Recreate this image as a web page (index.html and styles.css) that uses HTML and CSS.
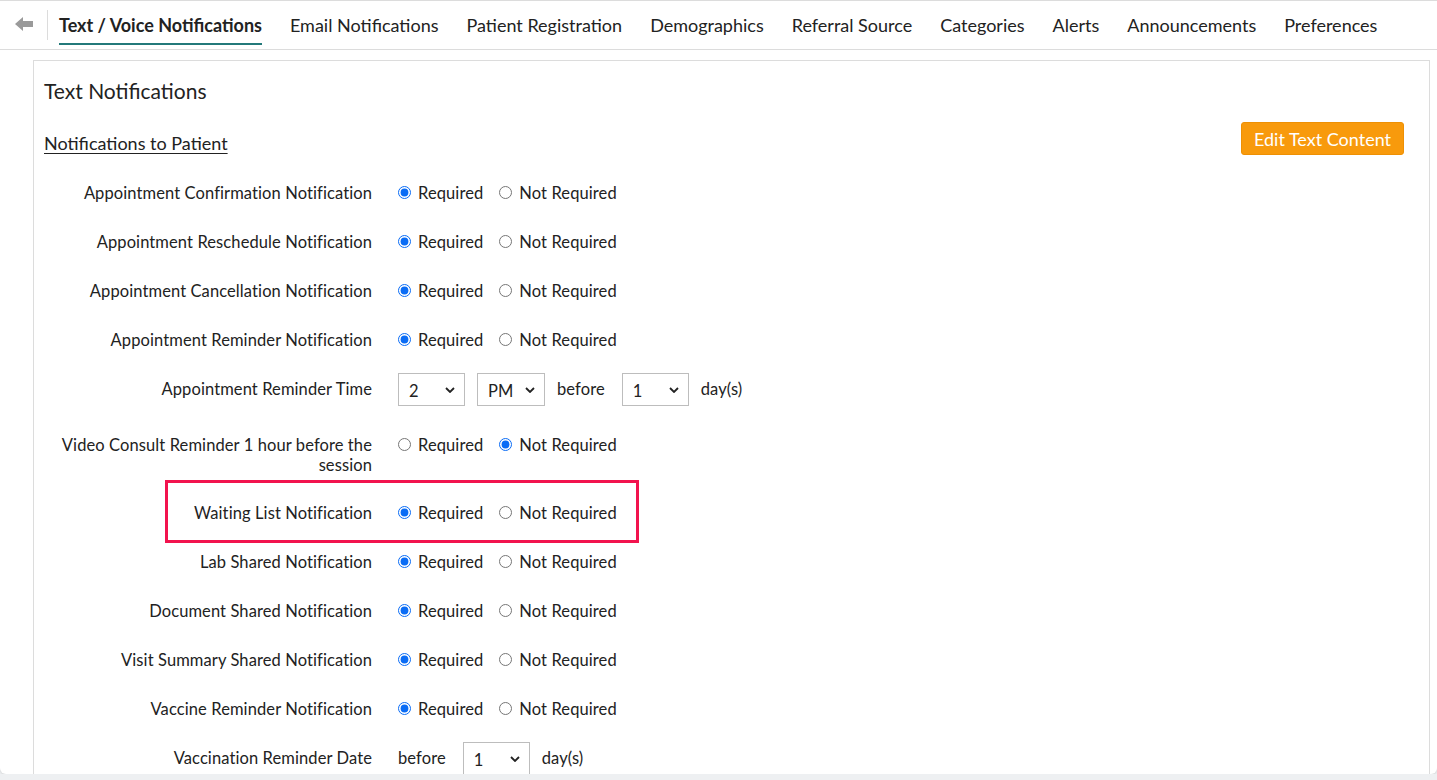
FILE: index.html
```html
<!DOCTYPE html>
<html lang="en">

<head>
    <meta charset="UTF-8">
    <meta name="viewport" content="width=device-width, initial-scale=1.0">
    <title>Text / Voice Notifications</title>
    <link rel="stylesheet" href="styles.css">
</head>

<body>
    <div class="page">
        <!-- top tabs -->
        <div class="topbar">
            <div class="back">
                <svg width="18" height="14" viewBox="0 0 18 14">
                    <polygon points="0,7 8,0 8,4 18,4 18,10 8,10 8,14" fill="#9a9a9a" />
                </svg>
            </div>
            <div class="sep"></div>
            <div class="tabs">
                <div class="tab active">Text / Voice Notifications</div>
                <div class="tab">Email Notifications</div>
                <div class="tab">Patient Registration</div>
                <div class="tab">Demographics</div>
                <div class="tab">Referral Source</div>
                <div class="tab">Categories</div>
                <div class="tab">Alerts</div>
                <div class="tab">Announcements</div>
                <div class="tab">Preferences</div>
            </div>
        </div>

        <!-- settings panel -->
        <div class="panel">
            <div class="panel-title">Text Notifications</div>
            <div class="panel-head">
                <div class="sub-title">Notifications to Patient</div>
                <button class="btn-orange">Edit Text Content</button>
            </div>

            <div class="row">
                <div class="label">Appointment Confirmation Notification</div>
                <div class="controls">
                    <label class="opt"><input type="radio" name="r1" checked> Required</label>
                    <label class="opt"><input type="radio" name="r1"> Not Required</label>
                </div>
            </div>
            <div class="row">
                <div class="label">Appointment Reschedule Notification</div>
                <div class="controls">
                    <label class="opt"><input type="radio" name="r2" checked> Required</label>
                    <label class="opt"><input type="radio" name="r2"> Not Required</label>
                </div>
            </div>
            <div class="row">
                <div class="label">Appointment Cancellation Notification</div>
                <div class="controls">
                    <label class="opt"><input type="radio" name="r3" checked> Required</label>
                    <label class="opt"><input type="radio" name="r3"> Not Required</label>
                </div>
            </div>
            <div class="row">
                <div class="label">Appointment Reminder Notification</div>
                <div class="controls">
                    <label class="opt"><input type="radio" name="r4" checked> Required</label>
                    <label class="opt"><input type="radio" name="r4"> Not Required</label>
                </div>
            </div>
            <div class="row row-select">
                <div class="label">Appointment Reminder Time</div>
                <div class="controls">
                    <select class="sel sel-num"><option>2</option></select>
                    <select class="sel sel-ampm"><option>PM</option></select>
                    <span class="before">before</span>
                    <select class="sel sel-num"><option>1</option></select>
                    <span>day(s)</span>
                </div>
            </div>
            <div class="row row-wrap">
                <div class="label">Video Consult Reminder 1 hour before the session</div>
                <div class="controls">
                    <label class="opt"><input type="radio" name="r5"> Required</label>
                    <label class="opt"><input type="radio" name="r5" checked> Not Required</label>
                </div>
            </div>
            <div class="row highlight">
                <div class="label">Waiting List Notification</div>
                <div class="controls">
                    <label class="opt"><input type="radio" name="r6" checked> Required</label>
                    <label class="opt"><input type="radio" name="r6"> Not Required</label>
                </div>
            </div>
            <div class="row">
                <div class="label">Lab Shared Notification</div>
                <div class="controls">
                    <label class="opt"><input type="radio" name="r7" checked> Required</label>
                    <label class="opt"><input type="radio" name="r7"> Not Required</label>
                </div>
            </div>
            <div class="row">
                <div class="label">Document Shared Notification</div>
                <div class="controls">
                    <label class="opt"><input type="radio" name="r8" checked> Required</label>
                    <label class="opt"><input type="radio" name="r8"> Not Required</label>
                </div>
            </div>
            <div class="row">
                <div class="label">Visit Summary Shared Notification</div>
                <div class="controls">
                    <label class="opt"><input type="radio" name="r9" checked> Required</label>
                    <label class="opt"><input type="radio" name="r9"> Not Required</label>
                </div>
            </div>
            <div class="row">
                <div class="label">Vaccine Reminder Notification</div>
                <div class="controls">
                    <label class="opt"><input type="radio" name="r10" checked> Required</label>
                    <label class="opt"><input type="radio" name="r10"> Not Required</label>
                </div>
            </div>
            <div class="row row-select">
                <div class="label">Vaccination Reminder Date</div>
                <div class="controls">
                    <span class="before">before</span>
                    <select class="sel sel-num"><option>1</option></select>
                    <span>day(s)</span>
                </div>
            </div>
        </div>
    </div>
</body>

</html>
```

FILE: styles.css
```css
/* global */
body {
    margin: 0;
    padding: 0;
    font-family: Lato, "Open Sans", sans-serif;
    color: #222;
    background-color: #eef0f2;
    overflow: hidden;
}

.page {
    height: 774px;
    background: #fff;
    border-radius: 0 0 6px 6px;
    box-shadow: 0 1px 3px rgba(0, 0, 0, 0.12);
    overflow: hidden;
}

/* top tabs */
.topbar {
    display: flex;
    height: 48px;
    border-top: 1px solid #dcdcdc;
    border-bottom: 1px solid #dcdcdc;
}

.back {
    width: 47px;
    display: flex;
    justify-content: center;
    align-items: center;
    padding-bottom: 2px;
    box-sizing: border-box;
}

.sep {
    width: 1px;
    height: 30px;
    margin-top: 9px;
    background: #dcdcdc;
}

.tabs {
    display: flex;
    gap: 28px;
    padding-left: 11px;
}

.tab {
    height: 35px;
    padding-top: 7px;
    line-height: 35px;
    font-size: 18px;
    color: #222;
    border-bottom: 2px solid transparent;
    white-space: nowrap;
}

.tab.active {
    font-weight: 700;
    border-bottom-color: #23797a;
}

/* panel */
.panel {
    margin: 10px 7px 0 33px;
    padding: 18px 0 0 10px;
    border: 1px solid #dcdcdc;
    height: 800px;
}

.panel-title {
    font-size: 21px;
    line-height: 24px;
    color: #222;
}

.panel-head {
    display: flex;
    justify-content: space-between;
    margin-top: 19px;
    padding-right: 25px;
    margin-bottom: 14px;
}

.sub-title {
    align-self: flex-end;
    font-size: 18px;
    line-height: 20px;
    margin-bottom: 2px;
    text-decoration: underline;
    text-underline-offset: 3px;
}

.btn-orange {
    height: 33px;
    width: 163px;
    background: #f89a0c;
    border: 1px solid #ee9004;
    border-radius: 3px;
    color: #fff;
    font-family: Lato, sans-serif;
    font-size: 18px;
    padding: 0;
}

/* rows */
.row {
    display: flex;
    align-items: flex-start;
    gap: 26px;
    padding: 14px 0;
    font-size: 16.5px;
    letter-spacing: 0.1px;
    line-height: 21px;
}

.row-select {
    align-items: center;
    padding: 8px 0 15px;
}

.label {
    width: 328px;
    flex-shrink: 0;
    text-align: right;
}

.row-wrap .label {
    line-height: 20px;
}

.controls {
    display: flex;
    align-items: center;
    gap: 12px;
}

.opt {
    display: flex;
    align-items: center;
    gap: 7px;
    margin-right: 4px;
}

.opt input {
    margin: 0 0 3px 0;
    width: 13px;
    height: 13px;
    accent-color: #0a6cf5;
}

.before {
    margin-right: 5px;
}

.sel {
    appearance: none;
    -webkit-appearance: none;
    height: 33px;
    border: 1px solid #bdbdbd;
    border-radius: 0;
    background: #fff url("data:image/svg+xml,%3Csvg xmlns='http://www.w3.org/2000/svg' width='10' height='6' viewBox='0 0 10 6'%3E%3Cpath d='M1 1l4 4 4-4' fill='none' stroke='%23222' stroke-width='1.8'/%3E%3C/svg%3E") no-repeat right 9px center;
    font-family: Lato, sans-serif;
    font-size: 16.5px;
    color: #222;
    padding: 2px 0 0 10px;
}

.sel-num {
    width: 67px;
}

.sel-ampm {
    width: 68px;
}

/* highlight box */
.highlight {
    position: relative;
}

.highlight::after {
    content: "";
    position: absolute;
    left: 121px;
    top: -9px;
    width: 474px;
    height: 63px;
    box-sizing: border-box;
    border: 3px solid #f2134e;
}
```
